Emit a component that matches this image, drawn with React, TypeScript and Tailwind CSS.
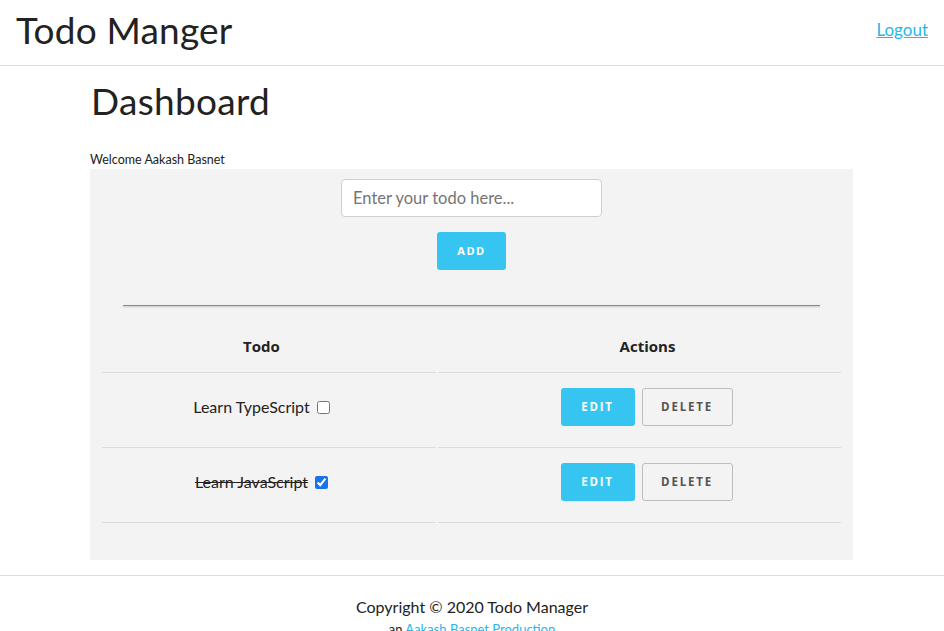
import React, { useState } from 'react';

interface Todo {
  id: number;
  text: string;
  done: boolean;
}

const initialTodos: Todo[] = [
  { id: 1, text: 'Learn TypeScript', done: false },
  { id: 2, text: 'Learn JavaScript', done: true },
];

const App: React.FC = () => {
  const [todos, setTodos] = useState<Todo[]>(initialTodos);
  const [draft, setDraft] = useState('');

  const toggle = (id: number) => {
    setTodos(todos.map((t) => (t.id === id ? { ...t, done: !t.done } : t)));
  };

  const addTodo = () => {
    if (!draft.trim()) return;
    setTodos([...todos, { id: Date.now(), text: draft, done: false }]);
    setDraft('');
  };

  return (
    <div className="min-h-screen bg-white text-[#222] font-['Lato',sans-serif]">
      <header className="h-[66px] flex items-center justify-between px-4 border-b border-[#dedede]">
        <h1 className="text-[37px] leading-none tracking-[0.2px] pb-[6px]">Todo Manger</h1>
        <a href="#" className="text-[17px] text-[#29b6e8] underline pb-[6px]">
          Logout
        </a>
      </header>

      <main className="w-[763px] ml-[90px] pb-[15px]">
        <h2 className="text-[37px] leading-none pt-[16px] pb-[33px] pl-[1px] tracking-[0.3px]">Dashboard</h2>
        <p className="text-[12.5px] leading-[16px] pb-[1px]">Welcome Aakash Basnet</p>

        <section className="bg-[#f3f3f3] h-[391px] px-[10px] pt-[10px]">
          <div className="flex flex-col items-center">
            <input
              value={draft}
              onChange={(e) => setDraft(e.target.value)}
              placeholder="Enter your todo here..."
              className="w-[261px] h-[38px] px-[11px] bg-white border border-[#cfcfcf] rounded-[4px] text-[16.5px] placeholder:text-[#757575] outline-none"
            />
            <button
              onClick={addTodo}
              className="mt-[15px] w-[69px] h-[38px] rounded-[3px] bg-[#35c5f0] text-white text-[11px] font-bold tracking-[1.5px] font-['Open_Sans',sans-serif]"
            >
              ADD
            </button>
          </div>

          <hr className="mx-[23px] mt-[35px] border-0 h-[1px] bg-[#8a8a8a] shadow-[0_1px_2px_rgba(0,0,0,0.25)]" />

          <table className="w-full mt-[16px] border-separate border-spacing-[2px]">
            <thead>
              <tr>
                <th className="w-[334px] h-[49px] pb-[4px] pr-[15px] border-b border-[#dcdcdc] text-[15px] font-bold font-['Open_Sans',sans-serif]">Todo</th>
                <th className="h-[49px] pb-[4px] pl-[16px] border-b border-[#dcdcdc] text-[15px] font-bold font-['Open_Sans',sans-serif]">Actions</th>
              </tr>
            </thead>
            <tbody>
              {todos.map((todo) => (
                <tr key={todo.id}>
                  <td className="h-[73px] pb-[9px] pr-[15px] border-b border-[#dcdcdc] text-center text-[16px]">
                    <span className={todo.done ? 'line-through' : ''}>{todo.text}</span>
                    <input
                      type="checkbox"
                      checked={todo.done}
                      onChange={() => toggle(todo.id)}
                      className="ml-[7px] w-[13px] h-[13px] align-[-1px] accent-[#1a73e8]"
                    />
                  </td>
                  <td className="h-[73px] pb-[9px] border-b border-[#dcdcdc] text-center">
                    <div className="flex justify-center gap-[7px] pl-[14px]">
                      <button className="w-[74px] h-[38px] rounded-[3px] bg-[#35c5f0] text-white text-[11.5px] font-bold tracking-[1.8px] font-['Open_Sans',sans-serif]">
                        EDIT
                      </button>
                      <button className="w-[91px] h-[38px] rounded-[3px] border border-[#bdbdbd] text-[#555] text-[11.5px] font-bold tracking-[1.8px] font-['Open_Sans',sans-serif]">
                        DELETE
                      </button>
                    </div>
                  </td>
                </tr>
              ))}
            </tbody>
          </table>
        </section>
      </main>

      <footer className="border-t border-[#dedede] pt-[21px] text-center">
        <p className="text-[16px] leading-[20px]">Copyright © 2020 Todo Manager</p>
        <p className="text-[13px] leading-[24px]">
          an <a href="#" className="text-[#29b6e8]">Aakash Basnet Production</a>
        </p>
      </footer>
    </div>
  );
};

export default App;
